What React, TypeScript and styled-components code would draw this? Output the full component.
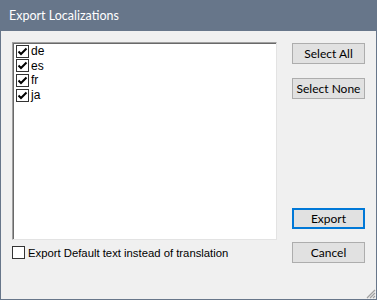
import React from 'react'
import styled, { createGlobalStyle } from 'styled-components'

const GlobalStyle = createGlobalStyle`
  html, body { margin: 0; padding: 0; background: #f0f0f0; }
  * { box-sizing: border-box; }
`

const Window = styled.div`
  position: relative;
  width: 377px;
  height: 300px;
  display: flex;
  flex-direction: column;
  background: #f0f0f0;
  border: 1px solid #67768a;
  border-top: none;
  font-family: "Liberation Sans", Arial, sans-serif;
  color: #000;
`

const TitleBar = styled.div`
  height: 31px;
  flex: none;
  margin: 0 -1px;
  background: #67768a;
  color: #fff;
  font-family: Lato, "Noto Sans", sans-serif;
  font-size: 12.5px;
  display: flex;
  align-items: center;
  padding: 0 0 1px 9px;
`

const Body = styled.div`
  flex: 1;
  display: grid;
  grid-template-columns: 265px 73px;
  grid-template-rows: 198px auto;
  column-gap: 15px;
  row-gap: 6px;
  align-items: start;
  padding: 11px 0 0 11px;
`

const ListBox = styled.div`
  height: 198px;
  background: #fff;
  border-style: solid;
  border-width: 1px;
  border-color: #a0a0a0 #e3e3e3 #e3e3e3 #a0a0a0;
  box-shadow: inset 1px 1px 0 #696969;
  padding: 1px 2px;
`

const Item = styled.label`
  display: flex;
  align-items: center;
  gap: 2px;
  height: 14.6px;
  font-size: 12px;
  padding-left: 1px;
`

const Box = styled.span`
  width: 13px;
  height: 13px;
  flex: none;
  background: #fff;
  border: 1px solid #333;
  display: flex;
  align-items: center;
  justify-content: center;
`

const ButtonColumn = styled.div`
  grid-column: 2;
  grid-row: 1 / 3;
  display: flex;
  flex-direction: column;
  padding-top: 1px;
`

const Button = styled.button<{ $default?: boolean; $gap?: number }>`
  width: 73px;
  height: 21px;
  flex: none;
  margin-top: ${p => p.$gap ?? 0}px;
  background: #e1e1e1;
  border: ${p => (p.$default ? '2px solid #0078d7' : '1px solid #adadad')};
  font-family: Lato, "Noto Sans", sans-serif;
  font-size: 12px;
  color: #000;
  padding: 0;
  display: flex;
  align-items: center;
  justify-content: center;
`

const Footer = styled.label`
  grid-column: 1;
  grid-row: 2;
  height: 13px;
  display: flex;
  align-items: center;
  gap: 3px;
  font-size: 11.3px;
`

const Grip = styled.svg`
  position: absolute;
  right: 0;
  bottom: 0;
`

const Check = () => (
  <svg width="11" height="11" viewBox="0 0 11 11">
    <path d="M1.5 5.5 L4 8 L9.5 2.5" fill="none" stroke="#000" strokeWidth="2" />
  </svg>
)

const langs = ['de', 'es', 'fr', 'ja']

export default function App() {
  return (
    <>
      <GlobalStyle />
      <Window>
        <TitleBar>Export Localizations</TitleBar>
        <Body>
          <ListBox>
            {langs.map(l => (
              <Item key={l}>
                <Box>
                  <Check />
                </Box>
                {l}
              </Item>
            ))}
          </ListBox>
          <ButtonColumn>
            <Button>Select All</Button>
            <Button $gap={14}>Select None</Button>
            <Button $default $gap={109}>Export</Button>
            <Button $gap={13}>Cancel</Button>
          </ButtonColumn>
          <Footer>
            <Box />
            Export Default text instead of translation
          </Footer>
        </Body>
        <Grip width="12" height="12" viewBox="0 0 12 12">
          <path d="M11 3 L3 11 M11 6 L6 11 M11 9 L9 11" stroke="#a0a0a0" strokeWidth="1.2" />
        </Grip>
      </Window>
    </>
  )
}
